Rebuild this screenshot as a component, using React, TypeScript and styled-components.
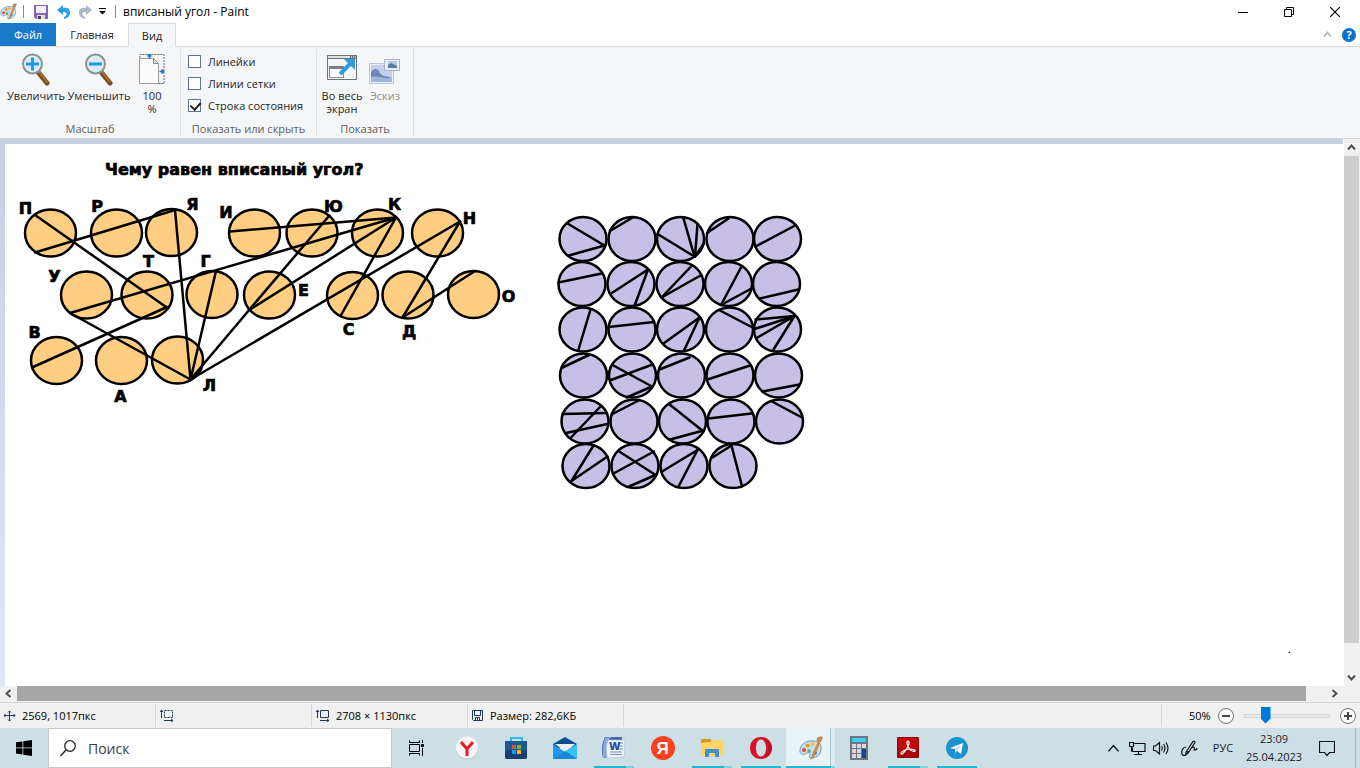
import React from "react";
import styled, { createGlobalStyle } from "styled-components";

const GlobalStyle = createGlobalStyle`
  * { box-sizing: border-box; }
  html, body { margin: 0; height: 100%; }
  body { font-family: "Open Sans", "Noto Sans", sans-serif; font-size: 12px; color: #1b1b1b; overflow: hidden; }
  button { font: inherit; color: inherit; background: none; border: 0; padding: 0; }
  svg { display: block; flex: none; }
`;

const Window = styled.div`
  display: flex;
  flex-direction: column;
  height: 100vh;
  background: #fff;
`;

/* ---------- title bar ---------- */

const TitleBar = styled.header`
  display: flex;
  align-items: center;
  height: 23px;
  flex: none;
  padding-right: 2px;
`;

const QuickButton = styled.button<{ $width: number; $start?: boolean }>`
  display: flex;
  align-items: center;
  justify-content: ${(p) => (p.$start ? "flex-start" : "center")};
  width: ${(p) => p.$width}px;
  height: 23px;
`;

const QuickDivider = styled.span`
  width: 1px;
  height: 13px;
  background: #8a8a8a;
`;

const WindowTitle = styled.h1`
  margin: 0;
  padding-left: 7px;
  flex: 1;
  font-size: 12px;
  font-weight: 400;
  line-height: 23px;
  color: #000;
`;

const WindowButton = styled.button`
  display: flex;
  align-items: center;
  justify-content: center;
  width: 46px;
  height: 21px;
`;

/* ---------- ribbon ---------- */

const TabRow = styled.nav`
  display: flex;
  align-items: stretch;
  height: 24px;
  flex: none;
  border-bottom: 1px solid #dadbdc;
`;

const Tab = styled.button<{ $kind?: "file" | "active" }>`
  font-size: 11px;
  line-height: 22px;
  padding: 0 14px;
  ${(p) => p.$kind === "file" && "background: #1979ca; color: #fff;"}
  ${(p) =>
    p.$kind === "active" &&
    "background: #f5f6f7; border: 1px solid #dadbdc; border-bottom: 0; padding: 0 13px; margin-bottom: -1px; line-height: 21px;"}
`;

const TabTools = styled.div`
  display: flex;
  align-items: center;
  gap: 10px;
  margin-left: auto;
  padding-right: 4px;
`;

const Ribbon = styled.div`
  display: flex;
  height: 92px;
  flex: none;
  padding: 2px 0;
  background: #f5f6f7;
  border-bottom: 1px solid #d3d6da;
`;

const Group = styled.section<{ $width: number }>`
  display: flex;
  flex-direction: column;
  width: ${(p) => p.$width}px;
  border-right: 1px solid #e0e2e4;
`;

const GroupBody = styled.div<{ $indent?: number }>`
  display: flex;
  flex: 1;
  padding-left: ${(p) => p.$indent ?? 0}px;
`;

const GroupName = styled.div`
  height: 14px;
  font-size: 11px;
  line-height: 14px;
  text-align: center;
  color: #5d5d5d;
`;

const BigButton = styled.button<{ $width: number }>`
  display: flex;
  flex-direction: column;
  align-items: center;
  width: ${(p) => p.$width}px;
  font-size: 11px;
  line-height: 13px;
  white-space: nowrap;
  color: #262626;
  &:disabled { color: #8f8f8f; }
  svg { margin: 3px 0; }
`;

const CheckList = styled.div`
  display: flex;
  flex-direction: column;
  gap: 6px;
  padding: 4px 0 0 7px;
  flex: 1;
`;

const CheckLabel = styled.label`
  display: flex;
  align-items: center;
  gap: 7px;
  height: 16px;
  font-size: 11px;
  color: #262626;
  white-space: nowrap;
`;

const CheckBox = styled.input`
  appearance: none;
  width: 13px;
  height: 13px;
  margin: 0;
  background: #fff;
  border: 1px solid #5b7399;
  position: relative;
  &:checked::after {
    content: "";
    position: absolute;
    left: 3px;
    top: 0;
    width: 5px;
    height: 8px;
    border: solid #1e1e1e;
    border-width: 0 2px 2px 0;
    transform: rotate(42deg);
  }
`;

/* ---------- canvas and scroll bars ---------- */

const Workspace = styled.main`
  display: flex;
  flex: 1;
  min-height: 0;
`;

const Viewport = styled.div`
  flex: 1;
  min-width: 0;
  overflow: hidden;
  padding: 5px 0 0 5px;
  border-right: 1px solid #fff;
  background: linear-gradient(#c6d0e2, #dfe7f4);
`;

const Sheet = styled.div`
  height: 100%;
  overflow: hidden;
  background: #fff;
`;

const VScroll = styled.div`
  display: flex;
  flex-direction: column;
  width: 16px;
  background: #f0f0f0;
`;

const HScroll = styled.div`
  display: flex;
  height: 16px;
  flex: none;
  padding-right: 17px;
  background: #f0f0f0;
`;

const ScrollArrow = styled.button`
  display: flex;
  align-items: center;
  justify-content: center;
  flex: none;
  width: 17px;
  height: 17px;
  ${VScroll} & { width: 15px; }
  ${HScroll} & { height: 15px; }
`;

const Track = styled.div`
  flex: 1;
`;

const VThumb = styled.div`
  width: 15px;
  height: 95%;
  background: #cdcdcd;
`;

const HThumb = styled.div`
  width: 98.5%;
  height: 15px;
  background: #a6a6a6;
`;

/* ---------- status bar ---------- */

const StatusBar = styled.footer`
  display: flex;
  align-items: center;
  height: 26px;
  flex: none;
  background: #f0f0f0;
  border-top: 1px solid #d7d7d7;
  color: #000;
`;

const StatusCell = styled.div`
  display: flex;
  align-items: center;
  gap: 6px;
  width: 156px;
  height: 23px;
  padding-left: 4px;
  font-size: 11px;
  white-space: nowrap;
  border-right: 1px solid #d7d7d7;
`;

const ZoomPanel = styled.div`
  display: flex;
  align-items: center;
  height: 23px;
  margin-left: auto;
  padding: 0 4px 0 27px;
  font-size: 11px;
  border-left: 1px solid #d7d7d7;
`;

const ZoomValue = styled.span`
  width: 29px;
`;

const ZoomSlider = styled.input`
  appearance: none;
  width: 86px;
  height: 18px;
  margin: 0 10px;
  background: none;
  &::-webkit-slider-runnable-track {
    height: 4px;
    background: #e7eaea;
    border: 1px solid #d6d6d6;
  }
  &::-webkit-slider-thumb {
    appearance: none;
    width: 10px;
    height: 17px;
    margin-top: -8px;
    background: #0078d7;
    clip-path: polygon(0 0, 100% 0, 100% 70%, 50% 100%, 0 70%);
  }
`;

/* ---------- taskbar ---------- */

const Taskbar = styled.div`
  display: flex;
  height: 40px;
  flex: none;
  background: #cbdfe5;
`;

const StartButton = styled.button`
  display: flex;
  align-items: center;
  justify-content: center;
  width: 48px;
`;

const SearchBox = styled.label`
  display: flex;
  align-items: center;
  gap: 12px;
  width: 344px;
  padding-left: 11px;
  background: #fff;
  border: 1px solid #c5cacc;
`;

const SearchInput = styled.input`
  flex: 1;
  min-width: 0;
  border: 0;
  padding: 0;
  background: none;
  outline: 0;
  font: 14px "Open Sans", "Noto Sans", sans-serif;
  &::placeholder { color: #3a3a3a; opacity: 1; }
`;

const AppButton = styled.button<{ $wide?: boolean; $run?: "one" | "many"; $active?: boolean }>`
  display: flex;
  align-items: center;
  justify-content: center;
  width: ${(p) => (p.$wide ? 51 : 49)}px;
  border: solid transparent;
  border-width: 0 5px 0 4px;
  background-clip: padding-box;
  ${(p) => p.$wide && "border-width: 0 6px 0 4px;"}
  ${(p) =>
    p.$run === "one" &&
    "background: linear-gradient(#27b6cf, #27b6cf) 0 38px / 100% 2px no-repeat padding-box;"}
  ${(p) =>
    p.$run === "many" &&
    "background: linear-gradient(90deg, #27b6cf 80%, #7fd2e0 80%) 0 38px / 100% 2px no-repeat padding-box;"}
  ${(p) =>
    p.$active &&
    `border-width: 0;
     background: linear-gradient(90deg, #27b6cf 45px, #7fd2e0 45px) 0 38px / 100% 2px no-repeat,
       linear-gradient(90deg, #e9f2f5 44px, #a9c4cc 44px, #a9c4cc 45px, #dcebef 45px);`}
`;

const Tray = styled.div`
  display: flex;
  align-items: center;
  margin-left: auto;
`;

const TrayButton = styled.button<{ $width: number }>`
  display: flex;
  align-items: center;
  justify-content: center;
  width: ${(p) => p.$width}px;
  height: 40px;
  font-size: 11px;
  line-height: 18px;
  color: #1b1b1b;
`;

const ShowDesktop = styled.button`
  width: 5px;
  height: 40px;
  margin-left: 8px;
  border-left: 1px solid #9fb9c1;
`;

/* ---------- icons ---------- */

const Palette = ({ size }: { size: number }) => (
  <svg width={size} height={size} viewBox="0 0 24 24">
    <path d="M1 16C0 9 7 4 14 5c6 0 9 4 8 9-1 6-6 8-10 8-2 0-2-2-1-3 1-2-1-3-3-2-3 2-6 2-7-1z" fill="#c3e0f3" stroke="#6c9dbf" strokeWidth="1" />
    <circle cx="5" cy="14" r="2" fill="#e8473c" />
    <circle cx="8.500" cy="9.500" r="2" fill="#f39a1e" />
    <circle cx="13.500" cy="8" r="2" fill="#f5c531" />
    <circle cx="10" cy="15" r="1.800" fill="#5cb64a" />
    <circle cx="16" cy="17" r="2" fill="#3f8fd6" />
    <path d="M21 7l-7 15-2 1 1-3 6-14z" fill="#ef8a2b" stroke="#b8611a" strokeWidth=".5" />
    <path d="M18 5c-1-2 0-4 2-4 2-1 4 0 4 0-1 2-1 4-3 6z" fill="#b88a5c" />
  </svg>
);

const SaveIcon = () => (
  <svg width="14" height="14" viewBox="0 0 14 14">
    <path d="M0 0h14v14H2l-2-2z" fill="#8466b4" />
    <path d="M2 1h10v7H2z" fill="#f4effa" />
    <path d="M3 10h8v4H3z" fill="#e3dced" />
    <path d="M4 11h3v3H4z" fill="#4a3a6b" />
  </svg>
);

const TurnArrow = ({ color, flip }: { color: string; flip?: boolean }) => (
  <svg width="14" height="14" viewBox="0 0 14 14">
    <path
      d="M0 5l6-5v3c5-1 7 1 7 5 0 3-2 5-6 6v-2c3-1 4-5 0-5H6v3z"
      fill={color}
      transform={flip ? "matrix(-1 0 0 1 14 0)" : undefined}
    />
  </svg>
);

const Magnifier = ({ plus }: { plus?: boolean }) => (
  <svg width="32" height="34" viewBox="0 0 32 34">
    <path d="M18 20l9 11" stroke="#7a4a1c" strokeWidth="5" strokeLinecap="round" />
    <path d="M19 20l8 10" stroke="#a8713a" strokeWidth="2" strokeLinecap="round" />
    <circle cx="12.500" cy="12" r="9.500" fill="#d9ecf8" stroke="#8d9297" strokeWidth="2" />
    <path d="M6 12h13" stroke="#1b9be3" strokeWidth="3" />
    {plus && <path d="M12.500 5.500v13" stroke="#1b9be3" strokeWidth="3" />}
  </svg>
);

const ActualSize = () => (
  <svg width="26" height="34" viewBox="0 0 26 34">
    <path d="M1 6V2.500h24v29H20" fill="none" stroke="#5f6468" strokeDasharray="2 1" />
    <path d="M.5 6.500h14l5 5v20H.5z" fill="#fbfbfb" stroke="#9b9b9b" />
    <path d="M14.500 6.500v5h5z" fill="#e4e4e4" stroke="#8b8b8b" />
    <path d="M10.500 2v5M8.500 4.500l2-2 2 2M20.500 19.500h4M22.500 17.500l2 2-2 2" fill="none" stroke="#1672d4" strokeWidth="1.500" />
  </svg>
);

const FullScreen = () => (
  <svg width="32" height="34" viewBox="0 0 32 34">
    <path d="M1.500 3.500h29v24h-29z" fill="#f4f5f6" stroke="#6e7276" />
    <path d="M1 3h30v4H1z" fill="#6e7276" />
    <path d="M2 4h22v2H2z" fill="#dfe1e3" />
    <path d="M25 5h1M27 5h1M29 5h1" stroke="#fff" />
    <path d="M3.500 14.500h14v11h-14z" fill="#fff" stroke="#8a8d90" />
    <path d="M3 14h15v3H3z" fill="#7b7f83" />
    <path d="M14 22L25 11" stroke="#2b9ce2" strokeWidth="4" />
    <path d="M18 7h11v11z" fill="#2b9ce2" />
  </svg>
);

const Thumbnail = () => (
  <svg width="32" height="34" viewBox="0 0 32 34">
    <path d="M.5 11.500h24v20H.5z" fill="#e9eff9" stroke="#b9c6de" />
    <path d="M2 13h21v17H2z" fill="#c2d2ee" />
    <path d="M2 20c4-5 7-3 9 1s8 3 12 5v2H2z" fill="#6f87b3" />
    <path d="M2 25c6-2 12 2 21 1v4H2z" fill="#9fb5dc" />
    <path d="M15.500 7.500h15v11h-15z" fill="#e9eff9" stroke="#a3b5d3" />
    <path d="M19 9h9v7h-9z" fill="#b6c8e8" />
    <path d="M19 13l3-2 6 3v2h-9z" fill="#5f78a6" />
  </svg>
);

const Chevron = ({ turn, color = "#505050", width = 2, size = 9 }: { turn: number; color?: string; width?: number; size?: number }) => (
  <svg width={size} height={size} viewBox="0 0 9 9">
    <path d="M1 6.500l3.500-4 3.500 4" fill="none" stroke={color} strokeWidth={width} transform={`rotate(${turn} 4.500 4.500)`} />
  </svg>
);

const statusStroke = { fill: "none", stroke: "#1f3a63" };

const MoveIcon = () => (
  <svg width="12" height="12" viewBox="0 0 12 12">
    <path d="M5.500 1v10M0 5.500h11M4 2.500L5.500 1 7 2.500M4 9.500L5.500 11 7 9.500M1.500 4L0 5.500l1.500 1.500M9.500 4L11 5.500 9.500 7" {...statusStroke} />
  </svg>
);

const SizeIcon = ({ dashed }: { dashed?: boolean }) => (
  <svg width="14" height="13" viewBox="0 0 14 13">
    <path d="M4.500 1.500h8v7h-8z" {...statusStroke} strokeDasharray={dashed ? "2 1" : undefined} />
    <path d="M1.500 9V1M0 3l1.500-2L3 3M4 11.500h9M11 10l2 1.500-2 1.500" {...statusStroke} />
  </svg>
);

const DiskIcon = () => (
  <svg width="12" height="12" viewBox="0 0 12 12">
    <path d="M.5.5h10v10h-9l-1-1zM2.500.5v5h6v-5M3.500 10.500v-3h4v3M5.500 8v2" {...statusStroke} />
  </svg>
);

const RoundIcon = ({ plus }: { plus?: boolean }) => (
  <svg width="16" height="16" viewBox="0 0 16 16">
    <circle cx="8" cy="8" r="7.500" fill="#f8f8f8" stroke="#777" />
    <path d="M4 8h8" stroke="#444" strokeWidth="2" />
    {plus && <path d="M8 4v8" stroke="#444" strokeWidth="2" />}
  </svg>
);

const WindowsLogo = () => (
  <svg width="16" height="16" viewBox="0 0 16 16">
    <path d="M0 2.300l6.500-.9v6.100H0zM7.300 1.300L16 0v7.500H7.300zM0 8.300h6.500v6.200L0 13.600zM7.300 8.300H16V16l-8.700-1.300z" />
  </svg>
);

const SearchIcon = () => (
  <svg width="16" height="17" viewBox="0 0 16 17">
    <circle cx="10" cy="6" r="5.300" fill="none" stroke="#222" strokeWidth="1.300" />
    <path d="M6 10L.5 16" stroke="#222" strokeWidth="1.400" />
  </svg>
);

const TaskViewIcon = () => (
  <svg width="17" height="16" viewBox="0 0 17 16">
    <path d="M1.500 4.500h10v7h-10zM1.500.500v2h10v-2M1.500 15.500v-2h10v2M14.500 0v3M14.500 8v8" fill="none" stroke="#000" />
    <path d="M13 4h3v3h-3z" />
  </svg>
);

const YandexBrowser = () => (
  <svg width="24" height="24" viewBox="0 0 24 24">
    <circle cx="12" cy="12.500" r="11" fill="#b9c6ca" />
    <circle cx="12" cy="11.500" r="11" fill="#f6f4f4" />
    <path d="M6 6l6 7 6-7M12 12v8" fill="none" stroke="#e01f26" strokeWidth="3" />
  </svg>
);

const StoreIcon = () => (
  <svg width="24" height="24" viewBox="0 0 24 24">
    <path d="M7 6V2h11v4" fill="none" stroke="#35b6ec" strokeWidth="2" />
    <path d="M1 5h22v16q0 2-2 2H3q-2 0-2-2z" fill="#175a97" />
    <path d="M1 14h22v7q0 2-2 2H3q-2 0-2-2z" fill="#1c3f73" />
    <path d="M8 9h4v4H8z" fill="#f25022" />
    <path d="M13 9h4v4h-4z" fill="#7fba00" />
    <path d="M8 14h4v4H8z" fill="#00a4ef" />
    <path d="M13 14h4v4h-4z" fill="#ffb900" />
  </svg>
);

const MailIcon = () => (
  <svg width="24" height="24" viewBox="0 0 24 24">
    <path d="M0 8l12-7 12 7v4H0z" fill="#0d4f8f" />
    <path d="M0 8v15h24V8l-11 9z" fill="#1f9be6" />
    <path d="M2 8h20l-9 8z" fill="#e8f0f4" />
    <path d="M24 8v15L12 15z" fill="#38c1f2" />
    <path d="M0 23l12-8 12 8z" fill="#1787dc" />
  </svg>
);

const WordIcon = () => (
  <svg width="24" height="24" viewBox="0 0 24 24">
    <path d="M3 1h17v3L8 21l-7 1C-1 14 0 7 3 1z" fill="#4468b0" />
    <path d="M3 2c1-1 4-1 6-1C5 6 4 14 5 21l-4 1C0 14 1 8 3 2z" fill="#8ca6da" />
    <path d="M6 4h17l-1 17-17 1C4 15 4 9 6 4z" fill="#f2f5fb" stroke="#a9b8d6" strokeWidth=".6" />
    <path d="M16 7h5M16 10h5M16 13h5M8 16h12M8 18.500h12" stroke="#6f8bc4" />
    <text x="7" y="14" fontFamily="Open Sans" fontSize="11" fontWeight="800" fill="#2a4d9b">W</text>
  </svg>
);

const YaIcon = () => (
  <svg width="24" height="24" viewBox="0 0 24 24">
    <circle cx="12" cy="12" r="12" fill="#fc3f1d" />
    <text x="11.500" y="18" textAnchor="middle" fontFamily="Liberation Sans" fontSize="17" fontWeight="700" fill="#fff">Я</text>
  </svg>
);

const FolderIcon = () => (
  <svg width="22" height="20" viewBox="0 0 22 20">
    <path d="M0 2q0-1 1-1h8l2 2h10v15H0z" fill="#d9980d" />
    <path d="M0 5l9-1 2-2h10q1 0 1 1v15H0z" fill="#ffd567" />
    <path d="M4 19v-7q0-1 1-1h12q1 0 1 1v7h-4v-4H8v4z" fill="#3c8fd9" />
  </svg>
);

const OperaIcon = () => (
  <svg width="24" height="24" viewBox="0 0 24 24">
    <path fillRule="evenodd" d="M12 1c6.500 0 11 4.700 11 11s-4.500 11-11 11S1 18.300 1 12 5.500 1 12 1zM12 3.500c-3.200 0-5 3.800-5 8.500s1.800 8.500 5 8.500 5-3.800 5-8.500-1.800-8.500-5-8.500z" fill="#dc1126" />
    <path d="M15 3c5 2 6 15 0 18 5-1 8-5 8-9s-3-8-8-9z" fill="#a80d20" opacity=".6" />
  </svg>
);

const CalcIcon = () => (
  <svg width="18" height="24" viewBox="0 0 18 24">
    <path d="M0 0h18v24H0z" fill="#6f7680" />
    <path d="M2 2h14v4H2z" fill="#3dd0f5" />
    <path d="M2 8h4v4H2zM7 8h4v4H7zM12 8h4v4h-4zM2 13h4v4H2zM7 13h4v4H7zM2 18h4v4H2zM7 18h4v4H7z" fill="#d7dade" />
    <path d="M12 13h4v9h-4z" fill="#17458c" />
  </svg>
);

const AcrobatIcon = () => (
  <svg width="22" height="22" viewBox="0 0 22 22">
    <path d="M.5.5h21v20H.5z" fill="#c40a0a" stroke="#8a0c0c" />
    <path d="M1 11h20v9H1z" fill="#8d0505" opacity=".5" />
    <path d="M4 16c1-2 5-4 9-4 3 0 6 1 5 2s-4 0-6-3-3-7-1-7 1 4-1 7-4 7-6 6z" fill="none" stroke="#fff" strokeWidth="1.200" />
  </svg>
);

const TelegramIcon = () => (
  <svg width="22" height="22" viewBox="0 0 22 22">
    <circle cx="11" cy="11" r="11" fill="#1c93d1" />
    <path d="M4 11l13-5-2 11-4-3-2 2v-4z" fill="#fff" />
    <path d="M9 12l6-4-4 6z" fill="#b9d9ec" />
  </svg>
);

const trayStroke = { fill: "none", stroke: "#111", strokeWidth: 1.2 };

const NetworkIcon = () => (
  <svg width="17" height="15" viewBox="0 0 17 15">
    <path d="M5 2.500h11v8H3.500v-4M9.500 10.500v3M5 13.500h8M.5 1.500h4v4h-4zM2.500 5.500v5" {...trayStroke} />
  </svg>
);

const SpeakerIcon = () => (
  <svg width="17" height="14" viewBox="0 0 17 14">
    <path d="M.5 5v4.500h2L6.500 13V1.500L2.500 5zM8.500 5q1.500 2 0 4.500M10.500 3q3 4 0 8.500M13 1.500q4 5.500 0 11.500" {...trayStroke} />
  </svg>
);

const PenIcon = () => (
  <svg width="17" height="16" viewBox="0 0 17 16">
    <path d="M5 12L12 1.500q2-1 2 1L7 13l-2 1zM5 7c-3 0-5 4-4 7s6 1 6-3M10 8c3-2 4 0 3 2 2 0 3-1 3-2" {...trayStroke} />
  </svg>
);

const NoticeIcon = () => (
  <svg width="16" height="17" viewBox="0 0 16 17">
    <path d="M.5 1.500h15v11h-5L8 15.500l-2.500-3h-5z" {...trayStroke} />
  </svg>
);

/* ---------- the picture being edited ---------- */

type Point = [number, number];
type Segment = [number, number, number, number];

const orangeCircles: Point[] = [
  [50.5, 233], [116.5, 233], [171.5, 232.5], [254.5, 233], [312, 233], [377.5, 233], [437.5, 233],
  [86.5, 295], [147, 295], [212, 294.5], [269.5, 295], [352.5, 295.5], [408, 295], [473.5, 294.5],
  [56.5, 360.5], [121.5, 360.5], [177.5, 360],
];

const orangeLines: Segment[] = [
  [35, 215, 167.5, 308], [35, 252.5, 175, 210], [175, 210, 190.5, 379.5], [167, 307, 32, 367.5],
  [70, 313, 396, 217.5], [70, 313, 190.5, 379.5], [216, 271, 190.5, 379.5], [329, 216, 250, 309],
  [250, 309, 190.5, 379.5], [230, 231.5, 396, 217.5], [396, 217.5, 250, 309.5], [396, 217.5, 340.5, 316],
  [460, 221.5, 190.5, 379.5], [460, 221.5, 402.5, 317.5], [402.5, 317.5, 475, 271],
];

const letters: [string, number, number][] = [
  ["П", 25.5, 214], ["Р", 97, 212], ["Я", 192.5, 210], ["И", 226, 218], ["Ю", 333.5, 212], ["К", 394.5, 210],
  ["Н", 469.5, 224], ["У", 54.5, 282], ["Т", 148.5, 267], ["Г", 205.5, 267], ["Е", 303.5, 296], ["С", 348.5, 335],
  ["Д", 409, 337], ["О", 508.5, 302], ["В", 34.5, 338], ["А", 120.5, 402], ["Л", 209.5, 391],
];

const purpleCircles: Point[] = [
  [583, 239], [632, 239], [680.5, 239], [730, 239], [777.5, 239],
  [582, 284], [631, 284], [680, 284], [728.5, 284], [776.5, 284],
  [583, 329.5], [632, 329.5], [680.5, 329.5], [729.5, 329.5], [777.5, 329.5],
  [583.5, 375.5], [632.5, 375.5], [681.5, 375.5], [730, 375.5], [778.5, 375.5],
  [585, 421.5], [634, 421.5], [682.5, 421.5], [731, 421.5], [779.5, 421.5],
  [586, 466], [635, 466], [684, 466], [733, 466],
];

const purpleLines: Segment[] = [
  [567.5, 223.5, 604.5, 245.5], [569, 255.5, 604.5, 245.5], [610, 231, 633.5, 217],
  [657.5, 234, 694.5, 256.5], [683.5, 218.5, 694.5, 256.5], [697.5, 224, 695, 256.5], [704, 243.5, 695, 256.5],
  [707, 233, 728.5, 218.5], [755.5, 246.5, 796, 225],
  [558.5, 282.5, 601.5, 273.5], [611, 293.5, 648, 269.5], [648, 269.5, 635, 304.5],
  [661.5, 297.5, 691.5, 266], [661.5, 297.5, 700.5, 275.5], [721, 305, 741, 267.5], [721, 305, 751.5, 288.5],
  [760, 298.5, 798.5, 289.5],
  [578.5, 349.5, 590.5, 309.5], [608.5, 327, 654, 322], [663.5, 343.5, 699.5, 317.5], [699.5, 317.5, 684, 350.5],
  [720, 310.5, 752.5, 327.5], [755.5, 319.5, 794.5, 316], [754.5, 329, 794.5, 316], [757.5, 337.5, 794.5, 316],
  [773.5, 349.5, 794.5, 316],
  [562.5, 367.5, 589, 355], [611, 380, 652.5, 364.5], [612.5, 365, 652, 386.5], [626.5, 397.5, 652, 386.5],
  [659.5, 369.5, 689.5, 357.5], [707.5, 379.5, 750, 365.5], [762.5, 391.5, 799.5, 384.5],
  [562.5, 414, 606.5, 413], [566, 433, 607.5, 424], [571, 437.5, 600.5, 406.5], [611.5, 414.5, 639.5, 400],
  [669, 404, 703.5, 431.5], [670, 439.5, 703.5, 430.5], [708.5, 418.5, 751.5, 413.5], [771, 401, 801, 417],
  [571.5, 481, 593.5, 445.5], [571.5, 481, 607.5, 456.5], [618.5, 451, 655.5, 475], [613.5, 473.5, 654, 451.5],
  [629, 486.5, 655.5, 475], [662, 471.5, 697.5, 450], [697.5, 450, 678.5, 486.5], [712.5, 457.5, 731.5, 445.5],
  [731.5, 445.5, 742, 486],
];

const Artwork = styled.svg`
  .orange { fill: #ffce82; }
  .purple { fill: #c7bfe6; }
  ellipse, line { stroke: #000; stroke-width: 2.5; stroke-linecap: round; }
  text { font: 900 16px "DejaVu Sans", "Noto Sans", sans-serif; fill: #000; stroke: #000; stroke-width: 0.7; }
`;

const Lines = ({ items }: { items: Segment[] }) => (
  <>
    {items.map(([x1, y1, x2, y2], i) => (
      <line key={i} x1={x1} y1={y1} x2={x2} y2={y2} />
    ))}
  </>
);

const Picture = () => (
  <Artwork width="1354" height="565" viewBox="5 144 1354 565">
    {orangeCircles.map(([cx, cy], i) => (
      <ellipse key={i} className="orange" cx={cx} cy={cy} rx="25.500" ry="23.500" />
    ))}
    {purpleCircles.map(([cx, cy], i) => (
      <ellipse key={i} className="purple" cx={cx} cy={cy} rx="23.500" ry="22" />
    ))}
    <Lines items={orangeLines} />
    <Lines items={purpleLines} />
    <text x="105" y="175">Чему равен вписаный угол?</text>
    {letters.map(([letter, x, y]) => (
      <text key={letter} x={x} y={y} textAnchor="middle">{letter}</text>
    ))}
    <circle cx="1289.500" cy="652.500" r=".8" />
  </Artwork>
);

export default function App() {
  return (
    <Window>
      <GlobalStyle />
      <TitleBar>
        <QuickButton $width={23} $start aria-label="Paint"><Palette size={17} /></QuickButton>
        <QuickDivider />
        <QuickButton $width={33} aria-label="Сохранить"><SaveIcon /></QuickButton>
        <QuickButton $width={14} aria-label="Отменить"><TurnArrow color="#2e9fe6" /></QuickButton>
        <QuickButton $width={28} aria-label="Вернуть"><TurnArrow color="#a9b8cb" flip /></QuickButton>
        <QuickButton $width={16} $start aria-label="Настройка панели">
          <svg width="7" height="7" viewBox="0 0 7 7"><path d="M0 .5h7" stroke="#000" /><path d="M0 3h7L3.500 6.500z" /></svg>
        </QuickButton>
        <QuickDivider />
        <WindowTitle>вписаный угол - Paint</WindowTitle>
        <WindowButton aria-label="Свернуть">
          <svg width="10" height="10" viewBox="0 0 10 10"><path d="M0 5.500h10" stroke="#000" /></svg>
        </WindowButton>
        <WindowButton aria-label="Восстановить">
          <svg width="10" height="10" viewBox="0 0 10 10"><path d="M.5 2.500h7v7h-7zM2.500 2.500v-2h7v7h-2" fill="none" stroke="#000" /></svg>
        </WindowButton>
        <WindowButton aria-label="Закрыть">
          <svg width="10" height="10" viewBox="0 0 10 10"><path d="M0 0l10 10M10 0L0 10" stroke="#000" strokeWidth="1.200" /></svg>
        </WindowButton>
      </TitleBar>

      <TabRow>
        <Tab $kind="file">Файл</Tab>
        <Tab>Главная</Tab>
        <Tab $kind="active">Вид</Tab>
        <TabTools>
          <button aria-label="Свернуть ленту"><Chevron turn={0} color="#b0b0b0" width={1.500} /></button>
          <button aria-label="Справка">
            <svg width="14" height="14" viewBox="0 0 14 14">
              <circle cx="7" cy="7" r="7" fill="#0b6fd0" />
              <text x="7" y="11" textAnchor="middle" fontFamily="Open Sans" fontSize="11" fontWeight="700" fill="#fff">?</text>
            </svg>
          </button>
        </TabTools>
      </TabRow>

      <Ribbon>
        <Group $width={181}>
          <GroupBody $indent={6}>
            <BigButton $width={60}><Magnifier plus />Увеличить</BigButton>
            <BigButton $width={66}><Magnifier />Уменьшить</BigButton>
            <BigButton $width={40}><ActualSize /><span>100<br />%</span></BigButton>
          </GroupBody>
          <GroupName>Масштаб</GroupName>
        </Group>
        <Group $width={136}>
          <CheckList>
            <CheckLabel><CheckBox type="checkbox" />Линейки</CheckLabel>
            <CheckLabel><CheckBox type="checkbox" />Линии сетки</CheckLabel>
            <CheckLabel><CheckBox type="checkbox" defaultChecked />Строка состояния</CheckLabel>
          </CheckList>
          <GroupName>Показать или скрыть</GroupName>
        </Group>
        <Group $width={97}>
          <GroupBody>
            <BigButton $width={50}><FullScreen /><span>Во весь<br />экран</span></BigButton>
            <BigButton $width={36} disabled><Thumbnail />Эскиз</BigButton>
          </GroupBody>
          <GroupName>Показать</GroupName>
        </Group>
      </Ribbon>

      <Workspace>
        <Viewport><Sheet><Picture /></Sheet></Viewport>
        <VScroll>
          <ScrollArrow aria-label="Вверх"><Chevron turn={0} /></ScrollArrow>
          <Track><VThumb /></Track>
          <ScrollArrow aria-label="Вниз"><Chevron turn={180} /></ScrollArrow>
        </VScroll>
      </Workspace>
      <HScroll>
        <ScrollArrow aria-label="Влево"><Chevron turn={-90} /></ScrollArrow>
        <Track><HThumb /></Track>
        <ScrollArrow aria-label="Вправо"><Chevron turn={90} /></ScrollArrow>
      </HScroll>

      <StatusBar>
        <StatusCell><MoveIcon />2569, 1017пкс</StatusCell>
        <StatusCell><SizeIcon dashed /></StatusCell>
        <StatusCell><SizeIcon />2708 × 1130пкс</StatusCell>
        <StatusCell><DiskIcon />Размер: 282,6КБ</StatusCell>
        <ZoomPanel>
          <ZoomValue>50%</ZoomValue>
          <button aria-label="Уменьшить масштаб"><RoundIcon /></button>
          <ZoomSlider type="range" aria-label="Масштаб" min={0} max={100} defaultValue={21} />
          <button aria-label="Увеличить масштаб"><RoundIcon plus /></button>
        </ZoomPanel>
      </StatusBar>

      <Taskbar>
        <StartButton aria-label="Пуск"><WindowsLogo /></StartButton>
        <SearchBox>
          <SearchIcon />
          <SearchInput type="text" placeholder="Поиск" aria-label="Поиск" />
        </SearchBox>
        <AppButton $wide aria-label="Представление задач"><TaskViewIcon /></AppButton>
        <AppButton aria-label="Яндекс Браузер"><YandexBrowser /></AppButton>
        <AppButton aria-label="Магазин"><StoreIcon /></AppButton>
        <AppButton aria-label="Почта"><MailIcon /></AppButton>
        <AppButton $run="many" aria-label="Word"><WordIcon /></AppButton>
        <AppButton aria-label="Яндекс"><YaIcon /></AppButton>
        <AppButton $run="many" aria-label="Проводник"><FolderIcon /></AppButton>
        <AppButton $run="one" aria-label="Opera"><OperaIcon /></AppButton>
        <AppButton $active aria-label="Paint"><Palette size={24} /></AppButton>
        <AppButton aria-label="Калькулятор"><CalcIcon /></AppButton>
        <AppButton $run="many" aria-label="Acrobat"><AcrobatIcon /></AppButton>
        <AppButton $run="one" aria-label="Telegram"><TelegramIcon /></AppButton>
        <Tray>
          <TrayButton $width={24} aria-label="Скрытые значки"><Chevron turn={0} color="#111" width={1} size={13} /></TrayButton>
          <TrayButton $width={24} aria-label="Сеть"><NetworkIcon /></TrayButton>
          <TrayButton $width={24} aria-label="Звук"><SpeakerIcon /></TrayButton>
          <TrayButton $width={32} aria-label="Перо"><PenIcon /></TrayButton>
          <TrayButton $width={36}>РУС</TrayButton>
          <TrayButton $width={66}>23:09<br />25.04.2023</TrayButton>
          <TrayButton $width={40} aria-label="Уведомления"><NoticeIcon /></TrayButton>
          <ShowDesktop aria-label="Показать рабочий стол" />
        </Tray>
      </Taskbar>
    </Window>
  );
}
